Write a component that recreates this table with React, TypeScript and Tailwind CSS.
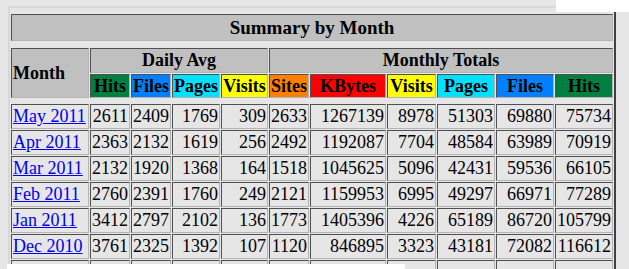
import React from "react";

type Row = { month: string; v: string[] };

// tabell-data, kopiert fra oppsummeringen
const rows: Row[] = [
  { month: "May 2011", v: ["2611", "2409", "1769", "309", "2633", "1267139", "8978", "51303", "69880", "75734"] },
  { month: "Apr 2011", v: ["2363", "2132", "1619", "256", "2492", "1192087", "7704", "48584", "63989", "70919"] },
  { month: "Mar 2011", v: ["2132", "1920", "1368", "164", "1518", "1045625", "5096", "42431", "59536", "66105"] },
  { month: "Feb 2011", v: ["2760", "2391", "1760", "249", "2121", "1159953", "6995", "49297", "66971", "77289"] },
  { month: "Jan 2011", v: ["3412", "2797", "2102", "136", "1773", "1405396", "4226", "65189", "86720", "105799"] },
  { month: "Dec 2010", v: ["3761", "2325", "1392", "107", "1120", "846895", "3323", "43181", "72082", "116612"] },
];

const cell =
  "border border-t-[#505050] border-l-[#505050] border-r-[#b4b4b4] border-b-[#b4b4b4] p-px";

const heads = [
  { label: "Hits", bg: "bg-[#008040]" },
  { label: "Files", bg: "bg-[#0080ff]" },
  { label: "Pages", bg: "bg-[#00e0ff]" },
  { label: "Visits", bg: "bg-[#ffff00]" },
  { label: "Sites", bg: "bg-[#ff8000]" },
  { label: "KBytes", bg: "bg-[#ff0000]" },
  { label: "Visits", bg: "bg-[#ffff00]" },
  { label: "Pages", bg: "bg-[#00e0ff]" },
  { label: "Files", bg: "bg-[#0080ff]" },
  { label: "Hits", bg: "bg-[#008040]" },
];

export default function App() {
  return (
    <div className="relative w-[629px] h-[269px] overflow-hidden bg-[#e6e6e6] pt-[6px] pl-[8px] font-['Liberation_Serif',serif] text-black">
      <table className="table-fixed w-[608px] border-separate border-spacing-[1px] border-2 border-t-[#d8d8d8] border-l-[#d8d8d8] border-r-[#404040] border-b-[#404040] text-[18px]">
        <colgroup>
          <col className="w-[78px]" />
          <col className="w-[40px]" />
          <col className="w-[40px]" />
          <col className="w-[48px]" />
          <col className="w-[47px]" />
          <col className="w-[40px]" />
          <col className="w-[76px]" />
          <col className="w-[49px]" />
          <col className="w-[58px]" />
          <col className="w-[58px]" />
          <col className="w-[58px]" />
        </colgroup>
        <tbody>
          <tr>
            <td colSpan={11} className="h-[4px] p-0"></td>
          </tr>
          <tr>
            <th colSpan={11} className={`${cell} h-[27px] bg-[#c0c0c0] text-center text-[19px] leading-[23px] font-bold`}>
              Summary by Month
            </th>
          </tr>
          <tr>
            <td colSpan={11} className="h-[5px] p-0"></td>
          </tr>
          <tr>
            <th rowSpan={2} className={`${cell} bg-[#c0c0c0] text-left align-middle leading-[21px] font-bold`}>
              Month
            </th>
            <th colSpan={4} className={`${cell} h-[25px] bg-[#c0c0c0] text-center leading-[21px] font-bold`}>
              Daily Avg
            </th>
            <th colSpan={6} className={`${cell} h-[25px] bg-[#c0c0c0] text-center leading-[21px] font-bold`}>
              Monthly Totals
            </th>
          </tr>
          <tr>
            {heads.map((h, i) => (
              <th key={i} className={`${cell} ${h.bg} h-[24px] text-center leading-[20px] font-bold whitespace-nowrap overflow-hidden`}>
                {h.label}
              </th>
            ))}
          </tr>
          <tr>
            <td colSpan={11} className="h-[4px] p-0"></td>
          </tr>
          {rows.map((r) => (
            <tr key={r.month}>
              <td className={`${cell} h-[25px] text-left leading-[21px] whitespace-nowrap`}>
                <a href="#" className="text-[#0000ee] underline">
                  {r.month}
                </a>
              </td>
              {r.v.map((n, i) => (
                <td key={i} className={`${cell} h-[25px] text-right leading-[21px] whitespace-nowrap`}>
                  {n}
                </td>
              ))}
            </tr>
          ))}
          {/* neste rad, nesten helt utenfor bildet */}
          <tr>
            {Array.from({ length: 11 }).map((_, i) => (
              <td key={i} className={`${cell} h-[25px] leading-[21px]`}>&nbsp;</td>
            ))}
          </tr>
        </tbody>
      </table>

      {/* hvite flekker som ligger over siden */}
      <div className="absolute left-[556px] top-0 w-[73px] h-[12px] bg-white" />
      <div className="absolute left-[7px] top-[264px] w-[398px] h-[5px] bg-white" />
    </div>
  );
}
